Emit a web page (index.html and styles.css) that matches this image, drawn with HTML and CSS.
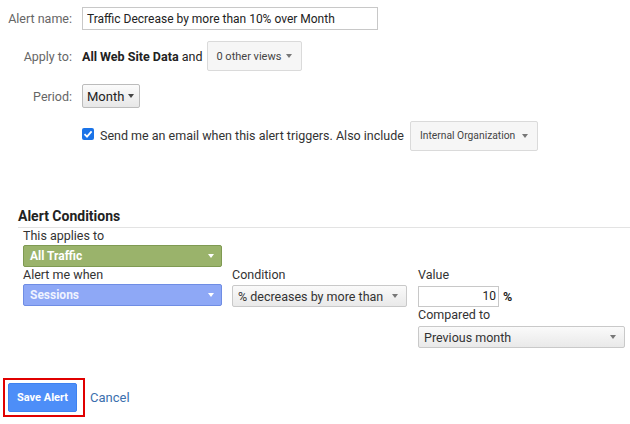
FILE: index.html
```html
<!DOCTYPE html>
<html lang="en">
<head>
  <meta charset="UTF-8" />
  <title>Create Alert</title>
  <link rel="stylesheet" href="styles.css">
</head>
<body>

  <div class="alert-form">
    <div class="row row-name">
      <label class="row-label" for="alertName">Alert name:</label>
      <input class="name-input" type="text" id="alertName" value="Traffic Decrease by more than 10% over Month" />
    </div>

    <div class="row row-apply">
      <span class="row-label">Apply to:</span>
      <span class="apply-text"><b>All Web Site Data</b> and</span>
      <span class="menu-btn views-btn">0 other views <i class="caret"></i></span>
    </div>

    <div class="row row-period">
      <span class="row-label">Period:</span>
      <span class="period-btn">Month <i class="caret dark"></i></span>
    </div>

    <div class="row row-email">
      <span class="check">
        <svg width="12" height="12" viewBox="0 0 12 12"><path d="M2.5 6.2 L5 8.6 L9.6 3.4" fill="none" stroke="#fff" stroke-width="1.8"/></svg>
      </span>
      <span class="email-text">Send me an email when this alert triggers. Also include</span>
      <span class="menu-btn org-btn">Internal Organization <i class="caret"></i></span>
    </div>
  </div>

  <h2 class="section-title">Alert Conditions</h2>

  <div class="conditions">
    <div class="cond-label">This applies to</div>
    <div></div>
    <div></div>

    <div class="pill pill-green">All Traffic <i class="caret white"></i></div>
    <div></div>
    <div></div>

    <div class="cond-label">Alert me when</div>
    <div class="cond-label">Condition</div>
    <div class="cond-label">Value</div>

    <div class="pill pill-blue">Sessions <i class="caret white"></i></div>
    <div class="select-box cond-select">% decreases by more than <i class="caret"></i></div>
    <div class="value-wrap">
      <input class="value-input" type="text" value="10" />
      <span class="pct">%</span>
    </div>

    <div></div>
    <div></div>
    <div class="cond-label">Compared to</div>

    <div></div>
    <div></div>
    <div class="select-box compare-select">Previous month <i class="caret"></i></div>
  </div>

  <div class="actions">
    <div class="highlight">
      <button class="save-btn">Save Alert</button>
    </div>
    <a class="cancel-link" href="#">Cancel</a>
  </div>

</body>
</html>
```

FILE: styles.css
```css
body {
  margin: 0;
  font-family: Roboto, Arial, sans-serif;
  font-size: 12.5px;
  color: #333;
  background: #fff;
}

.alert-form {
  padding-top: 7px;
}

.row {
  display: flex;
  align-items: center;
}

.row-label {
  width: 72px;
  margin-right: 10px;
  text-align: right;
  color: #666;
  flex-shrink: 0;
}

.name-input {
  width: 296px;
  height: 23px;
  box-sizing: border-box;
  border: 1px solid #c8c8c8;
  padding: 0 4px;
  font-family: Roboto, Arial, sans-serif;
  font-size: 12px;
  color: #222;
  outline: none;
}

.row-apply {
  margin-top: 11px;
}

.apply-text {
  color: #222;
}

.apply-text b {
  font-weight: bold;
}

.menu-btn {
  display: inline-flex;
  align-items: center;
  justify-content: space-between;
  height: 30px;
  box-sizing: border-box;
  border: 1px solid #dadada;
  border-radius: 2px;
  background: #f6f6f6;
  font-size: 11px;
  color: #444;
}

.views-btn {
  width: 95px;
  margin-left: 5px;
  padding: 0 9px 0 8px;
}

.org-btn {
  width: 128px;
  margin-left: 6px;
  padding: 0 9px 0 9px;
  font-size: 10.3px;
}

.caret {
  display: inline-block;
  width: 0;
  height: 0;
  border-left: 3.5px solid transparent;
  border-right: 3.5px solid transparent;
  border-top: 4px solid #777;
}

.caret.dark {
  border-top-color: #444;
}

.caret.white {
  border-top-color: #fff;
}

.row-period {
  margin-top: 13px;
}

.period-btn {
  display: inline-flex;
  align-items: center;
  gap: 4px;
  height: 24px;
  box-sizing: border-box;
  padding: 0 5px 0 4px;
  border: 1px solid #bcbcbc;
  border-radius: 2px;
  background: linear-gradient(#fbfbfb, #e7e7e7);
  color: #222;
  font-size: 13px;
}

.row-email {
  margin-top: 13px;
  margin-left: 82px;
  height: 29px;
}

.check {
  display: inline-flex;
  width: 12px;
  height: 12px;
  border-radius: 2px;
  background: #1a73e8;
  margin: 0 6px 4px 0;
}

.email-text {
  color: #333;
}

.section-title {
  margin: 58px 0 0 18px;
  padding-bottom: 2px;
  border-bottom: 1px solid #e3e3e3;
  font-size: 14px;
  font-weight: bold;
  color: #222;
  line-height: 17px;
}

.conditions {
  display: grid;
  grid-template-columns: 199px 175px 208px;
  column-gap: 10px;
  margin-left: 23px;
}

.conditions > :nth-child(3n) {
  margin-left: 1px;
}

.cond-label {
  line-height: 16px;
  color: #333;
}

.pill {
  display: flex;
  align-items: center;
  justify-content: space-between;
  height: 22px;
  box-sizing: border-box;
  padding: 0 7px 0 6px;
  border-radius: 2px;
  color: #fff;
  font-weight: bold;
  font-size: 12px;
}

.pill-green {
  margin-top: 1px;
  background: #9ab36b;
  border: 1px solid #7f9a52;
}

.pill-blue {
  margin-top: 1px;
  background: #8ea8f6;
  border: 1px solid #6f8de4;
  color: #f0f3ff;
}

.select-box {
  display: flex;
  align-items: center;
  justify-content: space-between;
  height: 22px;
  box-sizing: border-box;
  padding: 0 8px 0 5px;
  border: 1px solid #c9c9c9;
  border-radius: 2px;
  background: linear-gradient(#fafafa, #e9e9e9);
  color: #333;
  font-size: 12.5px;
}

.cond-select {
  margin-top: 2px;
}

.value-wrap {
  display: flex;
  align-items: center;
  margin-top: 2px;
}

.value-input {
  width: 81px;
  height: 21px;
  box-sizing: border-box;
  border: 1px solid #c8c8c8;
  padding: 0 2px;
  text-align: right;
  font-family: Roboto, Arial, sans-serif;
  font-size: 12px;
  color: #222;
  outline: none;
}

.pct {
  margin-left: 4px;
  font-weight: bold;
  color: #222;
}

.compare-select {
  margin-top: 3px;
}

.actions {
  display: flex;
  align-items: center;
  margin: 30px 0 0 3px;
}

.highlight {
  border: 2px solid #e00000;
  padding: 3px 6px 3px 3px;
}

.save-btn {
  width: 69px;
  height: 29px;
  border: 1px solid #3e82f0;
  border-radius: 2px;
  background: #4d8ef8;
  color: #fff;
  font-family: Roboto, Arial, sans-serif;
  font-size: 11px;
  font-weight: bold;
  cursor: pointer;
  display: block;
}

.cancel-link {
  margin-left: 5px;
  color: #3b6fae;
  text-decoration: none;
  font-size: 13px;
}
```
